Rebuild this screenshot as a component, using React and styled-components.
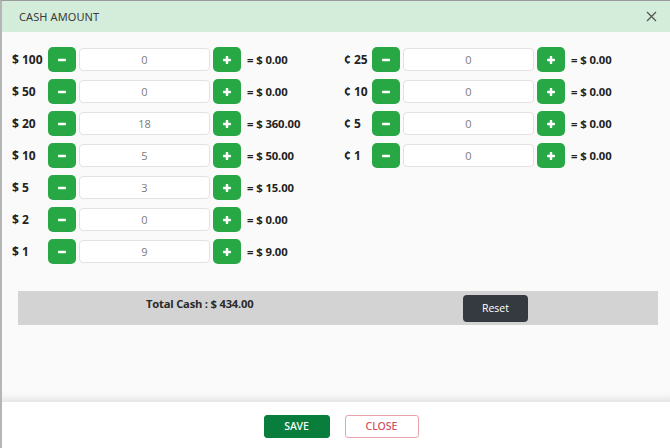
import React from "react";
import styled, { createGlobalStyle } from "styled-components";

const Global = createGlobalStyle`
  html, body { margin: 0; padding: 0; background: #fff; }
  body { font-family: "Open Sans", "Liberation Sans", sans-serif; color: #212529; }
  * { box-sizing: border-box; }
`;

const Modal = styled.div`
  width: 670px;
  height: 448px;
  display: flex;
  flex-direction: column;
  border-top: 1px solid #9a9a9a;
  border-left: 2px solid #b5b5b5;
  background: #fff;
  overflow: hidden;
`;

const Header = styled.div`
  height: 31px;
  flex: none;
  display: flex;
  align-items: center;
  justify-content: space-between;
  padding: 0 13px 0 17px;
  background: #d4edda;
`;

const Title = styled.div`
  font-family: "Noto Sans", "Open Sans", sans-serif;
  font-size: 11px;
  color: #3a3a3a;
  letter-spacing: 0.1px;
`;

const CloseX = styled.button`
  border: none;
  background: transparent;
  padding: 0;
  width: 12px;
  height: 12px;
  display: flex;
  align-items: center;
  justify-content: center;
  color: #555;
`;

const Body = styled.div`
  flex: 1;
  background: #fafafa;
  padding: 15px 10px 0 10px;
  box-shadow: inset 0 -10px 10px -8px rgba(0, 0, 0, 0.12);
`;

const Columns = styled.div`
  display: grid;
  grid-template-columns: 332px 1fr;
`;

const Column = styled.div`
  display: flex;
  flex-direction: column;
  gap: 7px;
`;

const Row = styled.div`
  display: grid;
  grid-template-columns: ${(p) => p.$label}px 28px 131px 28px auto;
  align-items: center;
  column-gap: 3px;
  height: 25px;
`;

const Label = styled.div`
  font-size: 12px;
  font-weight: 700;
  color: #222;
  white-space: nowrap;
`;

const StepBtn = styled.button`
  width: 28px;
  height: 25px;
  border: none;
  border-radius: 5px;
  background: #28a745;
  color: #fff;
  display: flex;
  align-items: center;
  justify-content: center;
  padding: 0;
`;

const Qty = styled.div`
  height: 23px;
  border: 1px solid #e2e2e2;
  border-radius: 4px;
  background: #fff;
  display: flex;
  align-items: center;
  justify-content: center;
  font-size: 11px;
  color: #7a7a7a;
`;

const Result = styled.div`
  font-size: 11.3px;
  font-weight: 700;
  color: #222;
  padding-left: 3px;
  letter-spacing: -0.1px;
  white-space: nowrap;
`;

const TotalBar = styled.div`
  margin: 27px 0 0 6px;
  width: 640px;
  height: 34px;
  background: #d3d3d3;
  display: grid;
  grid-template-columns: 320px 320px;
`;

const TotalText = styled.div`
  font-family: "Open Sans", sans-serif;
  font-size: 11.2px;
  font-weight: 700;
  color: #2a2a2a;
  padding: 5px 0 0 128px;
  letter-spacing: -0.2px;
  white-space: nowrap;
`;

const ResetCell = styled.div`
  display: flex;
  align-items: center;
  padding-left: 125px;
`;

const ResetBtn = styled.button`
  width: 65px;
  height: 27px;
  border: none;
  border-radius: 4px;
  background: #343a40;
  color: #fff;
  font-family: "Open Sans", sans-serif;
  font-size: 10.5px;
  font-weight: 500;
`;

const Footer = styled.div`
  height: 46px;
  flex: none;
  background: #fff;
  display: flex;
  align-items: center;
  justify-content: center;
  gap: 15px;
  padding-left: 10px;
  padding-top: 2px;
`;

const FootBtn = styled.button`
  height: 23px;
  width: ${(p) => p.$w}px;
  border-radius: 3px;
  font-family: "Noto Sans", "Open Sans", sans-serif;
  font-size: 10.5px;
  font-weight: 500;
  padding: 0;
  background: ${(p) => (p.$primary ? "#087d3c" : "#fff")};
  color: ${(p) => (p.$primary ? "#fff" : "#d0505f")};
  border: 1px solid ${(p) => (p.$primary ? "#087d3c" : "#eaa3ad")};
`;

const Minus = () => (
  <svg width="10" height="10" viewBox="0 0 10 10">
    <rect x="1" y="3.8" width="8" height="2.4" rx="0.4" fill="#fff" />
  </svg>
);

const Plus = () => (
  <svg width="10" height="10" viewBox="0 0 10 10">
    <rect x="1" y="3.8" width="8" height="2.4" rx="0.4" fill="#fff" />
    <rect x="3.8" y="1" width="2.4" height="8" rx="0.4" fill="#fff" />
  </svg>
);

const left = [
  ["$ 100", 0, "0.00"],
  ["$ 50", 0, "0.00"],
  ["$ 20", 18, "360.00"],
  ["$ 10", 5, "50.00"],
  ["$ 5", 3, "15.00"],
  ["$ 2", 0, "0.00"],
  ["$ 1", 9, "9.00"],
];

const right = [
  ["¢ 25", 0, "0.00"],
  ["¢ 10", 0, "0.00"],
  ["¢ 5", 0, "0.00"],
  ["¢ 1", 0, "0.00"],
];

const DenomRow = ({ label, qty, total, labelW }) => (
  <Row $label={labelW}>
    <Label>{label}</Label>
    <StepBtn aria-label="decrease"><Minus /></StepBtn>
    <Qty>{qty}</Qty>
    <StepBtn aria-label="increase"><Plus /></StepBtn>
    <Result>= $ {total}</Result>
  </Row>
);

export default function App() {
  return (
    <>
      <Global />
      <Modal>
        <Header>
          <Title>CASH AMOUNT</Title>
          <CloseX aria-label="close">
            <svg width="11" height="11" viewBox="0 0 11 11">
              <path d="M1 1 L10 10 M10 1 L1 10" stroke="#555" strokeWidth="1.3" />
            </svg>
          </CloseX>
        </Header>
        <Body>
          <Columns>
            <Column>
              {left.map(([l, q, t]) => (
                <DenomRow key={l} label={l} qty={q} total={t} labelW={33} />
              ))}
            </Column>
            <Column>
              {right.map(([l, q, t]) => (
                <DenomRow key={l} label={l} qty={q} total={t} labelW={25} />
              ))}
            </Column>
          </Columns>
          <TotalBar>
            <TotalText>Total Cash : $ 434.00</TotalText>
            <ResetCell>
              <ResetBtn>Reset</ResetBtn>
            </ResetCell>
          </TotalBar>
        </Body>
        <Footer>
          <FootBtn $primary $w={66}>SAVE</FootBtn>
          <FootBtn $w={74}>CLOSE</FootBtn>
        </Footer>
      </Modal>
    </>
  );
}
